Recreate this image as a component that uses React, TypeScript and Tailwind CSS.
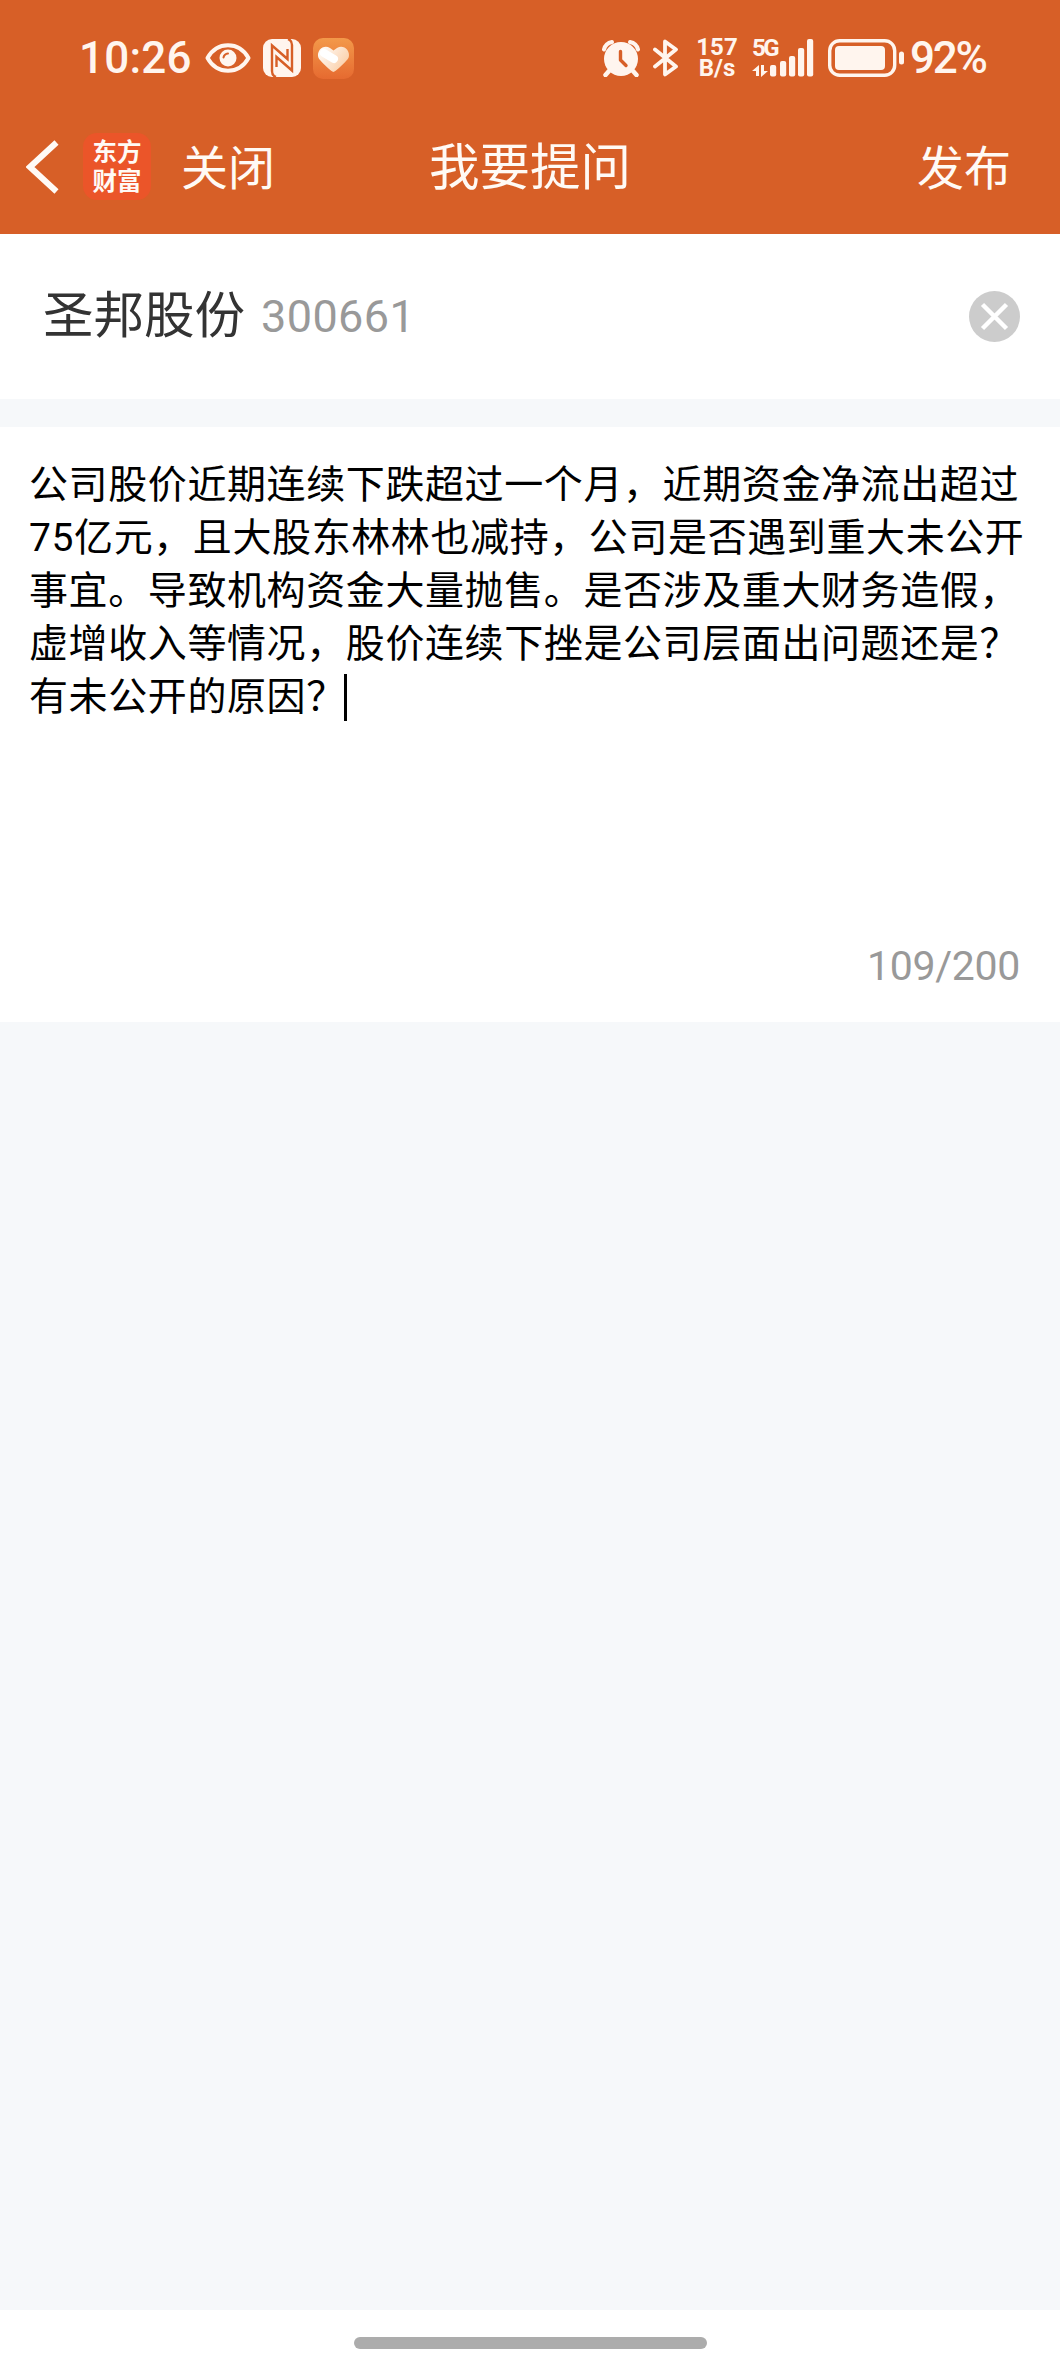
import { useState } from "react";

const questionLines = [
  "公司股价近期连续下跌超过一个月，近期资金净流出超过",
  "75亿元，且大股东林林也减持，公司是否遇到重大未公开",
  "事宜。导致机构资金大量抛售。是否涉及重大财务造假，",
  "虚增收入等情况，股价连续下挫是公司层面出问题还是？",
  "有未公开的原因？",
];

const EyeIcon = () => (
  <svg width="46" height="32" viewBox="0 0 46 32" fill="none">
    <path d="M2.5 16C12 -1 34 -1 43.5 16C34 33 12 33 2.5 16Z" stroke="#fff5ee" strokeWidth="4" strokeLinejoin="round" />
    <circle cx="23" cy="16" r="8.5" fill="#fff5ee" />
    <path d="M18.5 15.5A5 5 0 0 1 23 11.5" stroke="#d75f27" strokeWidth="2" strokeLinecap="round" />
  </svg>
);

const NfcIcon = () => (
  <svg width="38" height="38" viewBox="0 0 38 38" fill="none">
    <rect width="38" height="38" rx="9" fill="#fff5ee" />
    <path d="M13 38C10 37 9 35 9 32V6.500L24.500 20V10" stroke="#d75f27" strokeWidth="2.400" />
    <path d="M25 0C28 1 29 3 29 6V31.500L13.500 18V28" stroke="#d75f27" strokeWidth="2.400" />
  </svg>
);

const HeartIcon = () => (
  <svg width="41" height="41" viewBox="0 0 41 41" fill="none">
    <defs>
      <linearGradient id="tile" x1="0" y1="0" x2="0" y2="1">
        <stop stopColor="#f3994a" />
        <stop offset="1" stopColor="#e66a30" />
      </linearGradient>
      <linearGradient id="heart" x1="0" y1="0" x2="1" y2="0.6">
        <stop stopColor="#fff" />
        <stop offset="1" stopColor="#fbcfa8" />
      </linearGradient>
    </defs>
    <rect width="41" height="41" rx="10" fill="url(#tile)" />
    <path d="M20.5 34C19 34 6 22.500 5.200 19C3.500 12 11 6 17 10L20.500 12.500L24 10C30 6 37.500 12 35.800 19C35 22.500 22 34 20.500 34Z" fill="url(#heart)" />
    <path d="M11 15L21 21" stroke="#fff" strokeWidth="8" strokeLinecap="round" />
  </svg>
);

const AlarmIcon = () => (
  <svg width="38" height="38" viewBox="0 0 38 38" fill="none">
    <circle cx="19" cy="20" r="17" fill="#fff5ee" />
    <path d="M2 10.500A10 10 0 0 1 10 3M36 10.500A10 10 0 0 0 28 3" stroke="#fff5ee" strokeWidth="4" strokeLinecap="round" />
    <path d="M7 32L3.500 36M31 32L34.500 36" stroke="#fff5ee" strokeWidth="4.500" strokeLinecap="round" />
    <path d="M18.500 12.500V21L24 26.500" stroke="#d75f27" strokeWidth="3.400" strokeLinecap="round" strokeLinejoin="round" />
  </svg>
);

const BluetoothIcon = () => (
  <svg width="26" height="38" viewBox="0 0 26 38" fill="none">
    <path d="M2 10.500L23 27.500L12 35.500V2.500L23 10.500L2 27.500" stroke="#fff5ee" strokeWidth="3.800" strokeLinecap="round" strokeLinejoin="round" />
  </svg>
);

const SignalIcon = () => (
  <svg width="62" height="38" viewBox="0 0 62 38" fill="#fff5ee">
    <path d="M0 32L7 26V37H4V32ZM16 32L9 38V26H12V32Z" />
    <rect x="18" y="26" width="6.200" height="11.500" rx="2" />
    <rect x="28" y="22" width="6.200" height="15.500" rx="2" />
    <rect x="37" y="17" width="6.200" height="20.500" rx="2" />
    <rect x="46" y="9" width="6.200" height="28.500" rx="2" />
    <rect x="55" y="0" width="6.200" height="37.500" rx="2" />
  </svg>
);

const BatteryIcon = () => (
  <svg width="76" height="38" viewBox="0 0 76 38" fill="none">
    <rect x="1.700" y="1.700" width="65" height="34.600" rx="10" stroke="#fff5ee" strokeWidth="3.400" />
    <rect x="7" y="7" width="50" height="24" rx="4" fill="#fff5ee" />
    <rect x="71" y="12.500" width="5" height="13" rx="2.500" fill="#fff5ee" />
  </svg>
);

const StatusBar = () => (
  <div className="flex h-[116px] items-center pl-[79px] text-[#fff5ee]">
    <span className="w-[126px] whitespace-nowrap text-[44px] font-medium leading-none tracking-[0.2px]">10:26</span>
    <EyeIcon />
    <div className="ml-3">
      <NfcIcon />
    </div>
    <div className="ml-3">
      <HeartIcon />
    </div>
    <div className="ml-[248px]">
      <AlarmIcon />
    </div>
    <div className="ml-[13px]">
      <BluetoothIcon />
    </div>
    <div className="ml-4 w-[44px] whitespace-pre-line text-center text-[24px] font-bold leading-[21px]">{"157\nB/s"}</div>
    <div className="relative ml-[13px]">
      <SignalIcon />
      <span className="absolute -top-[3px] left-0 text-[24px] font-bold leading-none tracking-[-2.5px]">5G</span>
    </div>
    <div className="ml-[14px]">
      <BatteryIcon />
    </div>
    <span className="ml-[6px] whitespace-nowrap text-[44px] font-medium leading-none tracking-[-2.3px]">92%</span>
  </div>
);

const NavBar = () => (
  <div className="flex h-[118px] items-center pb-[17px] text-[#fffaf5]">
    <button className="ml-[26px]">
      <svg width="34" height="56" viewBox="0 0 34 56" fill="none">
        <path d="M30.500 3.500L4 28L30.500 52.500" stroke="#fffaf5" strokeWidth="6" />
      </svg>
    </button>
    <div className="ml-[23px] flex h-[67px] w-[68px] flex-col items-center justify-center rounded-[14px] bg-[#eb5529] text-[24.5px] font-bold leading-[29px]">
      <span>东方</span>
      <span>财富</span>
    </div>
    <button className="ml-[30px] w-[100px] whitespace-nowrap pt-[3px] text-left text-[47px] leading-none">关闭</button>
    <h1 className="ml-[148px] w-[210px] whitespace-nowrap pt-[3px] text-[50.5px] leading-none">我要提问</h1>
    <button className="ml-[278px] whitespace-nowrap pt-[3px] text-[47px] leading-none">发布</button>
  </div>
);

export default function App() {
  const [stock, setStock] = useState(true);

  return (
    <div className="flex h-[2376px] w-[1060px] flex-col bg-[#f6f8fa] font-['Roboto','Noto_Sans_CJK_SC',sans-serif]">
      <header className="bg-[#d75f27]">
        <StatusBar />
        <NavBar />
      </header>

      {/* Selected stock */}
      <section className="flex h-[165px] items-center bg-white pl-[43px] pr-10">
        <span className="w-[218px] whitespace-nowrap text-[50.5px] leading-none text-[#333]">{stock && "圣邦股份"}</span>
        <span className="text-[45px] leading-none tracking-[0.4px] text-[#999]">{stock && "300661"}</span>
        <button className="ml-auto" onClick={() => setStock(false)}>
          <svg width="51" height="51" viewBox="0 0 51 51" fill="none">
            <circle cx="25.500" cy="25.500" r="25.500" fill="#ccc" />
            <path d="M13.500 13.500L37.500 37.500M37.500 13.500L13.500 37.500" stroke="#fff" strokeWidth="4.500" />
          </svg>
        </button>
      </section>

      {/* Question body */}
      <section className="mt-7 flex h-[595px] flex-col bg-white pl-[29px] pr-10 pt-[32px] text-black">
        {questionLines.map((line, i) => (
          <p key={i} className="flex h-[53px] items-center whitespace-nowrap text-[39px] leading-[53px] tracking-[0.6px]">
            {line}
            {i === questionLines.length - 1 && <span className="-ml-[2px] h-[47px] w-[3px] bg-black" />}
          </p>
        ))}
        <span className="mb-[35px] mt-auto text-right text-[41px] leading-none tracking-[-0.3px] text-[#999]">109/200</span>
      </section>

      {/* Gesture bar */}
      <footer className="mt-auto flex h-[66px] justify-center bg-white pt-[27px]">
        <div className="h-3 w-[353px] rounded-full bg-[#acacac]" />
      </footer>
    </div>
  );
}
